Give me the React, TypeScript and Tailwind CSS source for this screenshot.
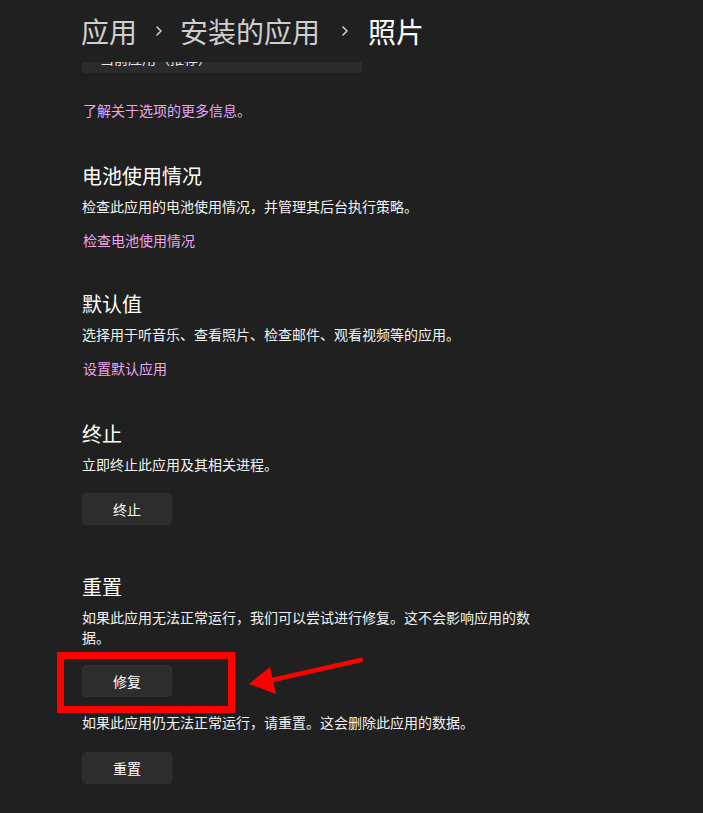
import React from 'react';

const font = { fontFamily: '"Segoe UI", "Noto Sans CJK SC", "Noto Sans", sans-serif' };

function Section({ title, desc, children, className = '' }: { title: string; desc: string; children?: React.ReactNode; className?: string }) {
  return (
    <div className={className}>
      <h2 className="text-[20px] leading-[28px] text-white">{title}</h2>
      <p className="mt-[6px] w-[452px] text-[14px] leading-[20px] text-[#f2f2f2]">{desc}</p>
      {children}
    </div>
  );
}

function Link({ label, className = '' }: { label: string; className?: string }) {
  return <div className={`pl-[1px] text-[14px] leading-[20px] text-[#eaa6f2] ${className}`}>{label}</div>;
}

function Button({ label, className = '' }: { label: string; className?: string }) {
  return (
    <button className={`flex h-[32px] w-[90px] items-center justify-center rounded-[4px] border border-[#303030] bg-[#2d2d2d] text-[14px] text-white ${className}`}>
      {label}
    </button>
  );
}

function Chevron({ className }: { className: string }) {
  return (
    <svg width="10" height="38" viewBox="0 0 10 38" className={className}>
      <path d="M3 15 L7 19 L3 23" stroke="#cfcfcf" strokeWidth="1.6" fill="none" strokeLinecap="round" strokeLinejoin="round" />
    </svg>
  );
}

export default function App() {
  return (
    <div className="relative h-[813px] w-[703px] overflow-hidden bg-[#202020]" style={font}>
      {/* breadcrumb header */}
      <div className="flex h-[62px] items-start pl-[81px] pt-[12px] text-[28px] leading-[38px]">
        <span className="text-[#cfcfcf]">应用</span>
        <Chevron className="ml-[17px] mr-[16px]" />
        <span className="text-[#cfcfcf]">安装的应用</span>
        <Chevron className="ml-[20px] mr-[18px]" />
        <span className="text-white">照片</span>
      </div>

      <div className="pl-[82px]">
        {/* clipped dropdown from the previous section */}
        <div className="h-[11px] w-[280px] overflow-hidden rounded-b-[4px] bg-[#2b2b2b]">
          <div className="-mt-[14px] pl-[18px] text-[14px] leading-[20px] text-[#e8e8e8]">当前应用（推荐）</div>
        </div>

        <Link label="了解关于选项的更多信息。" className="mt-[27px]" />

        <Section title="电池使用情况" desc="检查此应用的电池使用情况，并管理其后台执行策略。" className="mt-[42px]">
          <Link label="检查电池使用情况" className="mt-[14px]" />
        </Section>

        <Section title="默认值" desc="选择用于听音乐、查看照片、检查邮件、观看视频等的应用。" className="mt-[40px]">
          <Link label="设置默认应用" className="mt-[14px]" />
        </Section>

        <Section title="终止" desc="立即终止此应用及其相关进程。" className="mt-[42px]">
          <Button label="终止" className="mt-[19px]" />
        </Section>

        <Section title="重置" desc="如果此应用无法正常运行，我们可以尝试进行修复。这不会影响应用的数据。" className="mt-[48px]">
          <Button label="修复" className="mt-[18px]" />
          <p className="mt-[15px] text-[14px] leading-[20px] text-[#f2f2f2]">如果此应用仍无法正常运行，请重置。这会删除此应用的数据。</p>
          <Button label="重置" className="mt-[20px]" />
        </Section>
      </div>

      {/* annotation: red box and arrow */}
      <div className="absolute left-[57px] top-[652px] h-[61px] w-[178px] border-[7px] border-[#ff0000]" />
      <svg className="absolute left-0 top-0" width="703" height="813" viewBox="0 0 703 813">
        <line x1="361" y1="660" x2="268" y2="681" stroke="#ff0000" strokeWidth="4.5" strokeLinecap="round" />
        <polygon points="249,684 270,667 276,694" fill="#ff0000" />
      </svg>
    </div>
  );
}
